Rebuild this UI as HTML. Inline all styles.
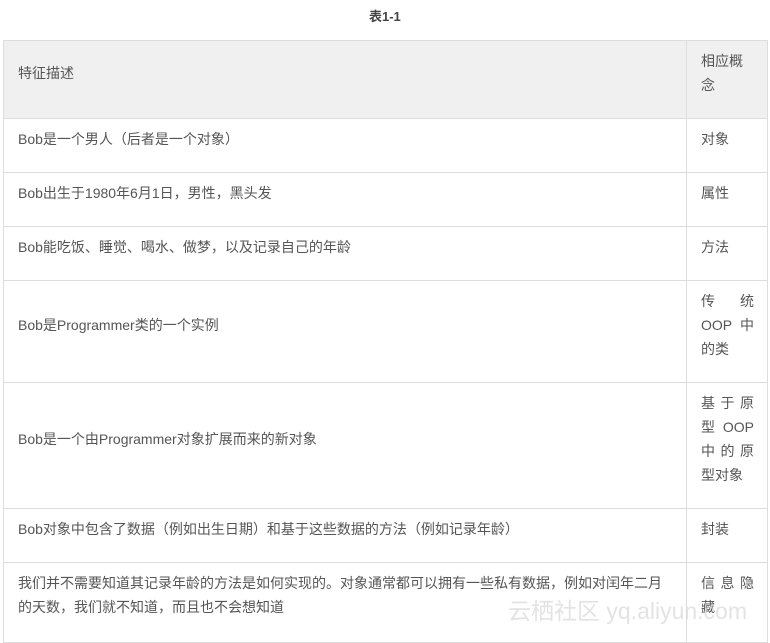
<!DOCTYPE html>
<html><head><meta charset="utf-8"><style>
*{margin:0;padding:0;box-sizing:border-box}
body{width:770px;height:630px;overflow:hidden;background:#fff;font-family:"Liberation Sans","Noto Sans CJK SC",sans-serif;font-size:14px;color:#555}
.t{position:absolute;left:369px;top:6px;font-weight:bold;font-size:13px;color:#444}
.tb{position:absolute;left:3px;top:40px;width:765px;border-top:1px solid #ddd;border-left:1px solid #ddd;border-right:1px solid #ddd}
.r{display:flex;border-bottom:1px solid #ddd}
.a{width:683px;border-right:1px solid #ddd;padding:0 14px 14px;display:flex;align-items:center;line-height:24px}
.b{width:53px;margin-left:14px;padding-top:8px;line-height:24px;text-align:justify;text-justify:inter-character}
.h{background:#f0f0f0}
</style></head><body>
<div class="t">表1-1</div>
<div class="tb">
<div class="r h" style="height:78px"><div class="a">特征描述</div><div class="b" style="text-align:left">相应概念</div></div>
<div class="r" style="height:54px"><div class="a" style="align-items:flex-start;padding-top:8px">Bob是一个男人（后者是一个对象）</div><div class="b">对象</div></div>
<div class="r" style="height:54px"><div class="a" style="align-items:flex-start;padding-top:8px">Bob出生于1980年6月1日，男性，黑头发</div><div class="b">属性</div></div>
<div class="r" style="height:54px"><div class="a" style="align-items:flex-start;padding-top:8px">Bob能吃饭、睡觉、喝水、做梦，以及记录自己的年龄</div><div class="b">方法</div></div>
<div class="r" style="height:102px"><div class="a">Bob是Programmer类的一个实例</div><div class="b">传 统 OOP 中的类</div></div>
<div class="r" style="height:126px"><div class="a">Bob是一个由Programmer对象扩展而来的新对象</div><div class="b">基于原型 OOP 中的原型对象</div></div>
<div class="r" style="height:54px"><div class="a" style="align-items:flex-start;padding-top:8px">Bob对象中包含了数据（例如出生日期）和基于这些数据的方法（例如记录年龄）</div><div class="b">封装</div></div>
<div class="r" style="height:80px"><div class="a" style="align-items:flex-start;padding-top:8px">我们并不需要知道其记录年龄的方法是如何实现的。对象通常都可以拥有一些私有数据，例如对闰年二月的天数，我们就不知道，而且也不会想知道</div><div class="b">信息隐藏</div></div>
</div>
<div style="position:absolute;left:508px;top:592px;font-size:23px;color:rgba(215,215,215,.7)">云栖社区 yq.aliyun.com</div>
</body></html>
